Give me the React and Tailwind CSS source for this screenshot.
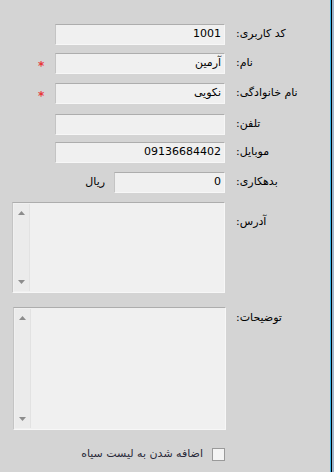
import React from "react";

const font = { fontFamily: '"DejaVu Sans", Tahoma, sans-serif' };

function Field({ value = "", width = 170 }) {
  return (
    <div
      dir="rtl"
      className={`h-[21px] bg-[#f0f0f0] border border-t-[#adadad] border-l-[#c4c4c4] border-r-[#f7f7f7] border-b-[#f7f7f7] flex items-center pr-[3px] text-[11px] text-black ${width === 170 ? "w-[170px]" : "w-[111px]"}`}
    >
      {value}
    </div>
  );
}

function Row({ label, value, required, mt }) {
  return (
    <div className={`flex items-center h-[21px] ${mt}`}>
      <div className="w-[55px] flex">
        {required && <span className="ml-[38px] text-[12px] leading-none font-bold text-[#e8383b] mt-[5px]">*</span>}
      </div>
      <Field value={value} />
      <span dir="rtl" className="ml-[11px] text-[11px] text-black">{label}</span>
    </div>
  );
}

function TextArea({ h }) {
  return (
    <div className={`w-[213px] ${h} bg-[#f0f0f0] border border-t-[#adadad] border-l-[#c4c4c4] border-r-[#f7f7f7] border-b-[#f7f7f7] flex`}>
      <div className="w-[16px] mt-[1px] mb-[1px] ml-[1px] bg-[#ebebeb] border-r border-[#e2e2e2] flex flex-col justify-between items-center py-[7px]">
        <svg width="7" height="4" viewBox="0 0 7 4"><path d="M3.5 0 L7 4 L0 4 Z" fill="#8c8c8c" /></svg>
        <svg width="7" height="4" viewBox="0 0 7 4"><path d="M0 0 L7 0 L3.5 4 Z" fill="#8c8c8c" /></svg>
      </div>
    </div>
  );
}

export default function App() {
  return (
    <div className="w-[334px] h-[472px] bg-[#d4d4d4] flex overflow-hidden" style={font}>
      <div className="w-[330px] flex flex-col pt-[24px]">
        <Row label="کد کاربری:" value="1001" />
        <Row label="نام:" value="آرمین" required mt="mt-[8px]" />
        <Row label="نام خانوادگی:" value="نکویی" required mt="mt-[9px]" />
        <Row label="تلفن:" value="" mt="mt-[10px]" />
        <Row label="موبایل:" value="09136684402" mt="mt-[7px]" />
        <div className="flex items-center h-[21px] mt-[9px]">
          <div className="w-[114px] flex justify-end pr-[9px]">
            <span dir="rtl" className="text-[11px] text-black">ریال</span>
          </div>
          <Field value="0" width={111} />
          <span dir="rtl" className="ml-[11px] text-[11px] text-black">بدهکاری:</span>
        </div>

        <div className="flex mt-[9px]">
          <div className="w-[12px]" />
          <TextArea h="h-[91px]" />
          <span dir="rtl" className="ml-[11px] mt-[12px] text-[11px] text-black">آدرس:</span>
        </div>

        <div className="flex mt-[14px]">
          <div className="w-[13px]" />
          <TextArea h="h-[123px]" />
          <span dir="rtl" className="ml-[10px] mt-[3px] text-[11px] text-black">توضیحات:</span>
        </div>

        <div className="flex items-center mt-[18px] h-[13px]">
          <div className="w-[212px] flex justify-end pr-[9px]">
            <span dir="rtl" className="text-[11px] text-[#2a2a3a]">اضافه شدن به لیست سیاه</span>
          </div>
          <div className="w-[13px] h-[13px] border border-[#9a9a9a] bg-[#f4f4f4]" />
        </div>
      </div>
      <div className="w-[1px] bg-[#3cb4e8]" />
      <div className="w-[1px] bg-black" />
      <div className="w-[2px] bg-[#9db4cc]" />
    </div>
  );
}
